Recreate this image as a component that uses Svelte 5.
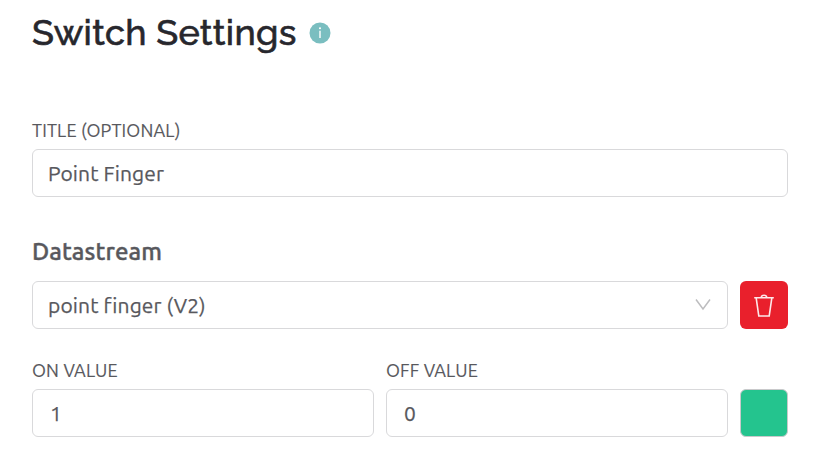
<script>
  let title = $state('Point Finger');
  let onValue = $state('1');
  let offValue = $state('0');
</script>

<main class="settings">
  <header>
    <h1>Switch Settings</h1>
    <svg class="info" width="22" height="22" viewBox="0 0 22 22" aria-label="Information">
      <circle cx="11" cy="11" r="10.5" fill="#7abec0" />
      <circle cx="11" cy="6.2" r="1.05" fill="#fff" />
      <path d="M11 8.7V16" stroke="#fff" stroke-width="1.4" />
    </svg>
  </header>

  <label class="field title-field">
    <span class="caption">TITLE (OPTIONAL)</span>
    <input class="box" bind:value={title} />
  </label>

  <h2>Datastream</h2>
  <div class="row">
    <button class="box select">
      <span>point finger (V2)</span>
      <svg width="18" height="14" viewBox="0 0 18 14" fill="none" stroke="#bdbdbf" stroke-width="1.5">
        <path d="M2 1.5 9 11 16 1.5" />
      </svg>
    </button>
    <button class="square delete" aria-label="Delete">
      <svg width="24" height="26" viewBox="0 0 24 26" fill="none" stroke="#fff" stroke-opacity=".9" stroke-width="1.6">
        <path d="M2.2 5.8H21.8M4.2 6.1 6.8 24H17.2L19.8 6.1M9.3 5.4Q9.5 3.3 12 3.3T14.7 5.4" />
      </svg>
    </button>
  </div>

  <div class="row values">
    <label class="field">
      <span class="caption">ON VALUE</span>
      <input class="box number" bind:value={onValue} />
    </label>
    <label class="field">
      <span class="caption">OFF VALUE</span>
      <input class="box number" bind:value={offValue} />
    </label>
    <button class="square colour" aria-label="Colour"></button>
  </div>
</main>

<style>
  :global(body) { background: #fff; }
  .settings {
    box-sizing: border-box;
    width: 824px;
    height: 469px;
    padding: 8px 36px 0 32px;
    overflow: hidden;
    font-family: Ubuntu, "Noto Sans", sans-serif;
    color: #58585d;
  }
  header { display: flex; align-items: center; height: 50px; }
  h1 {
    margin: 0;
    padding-bottom: 2px;
    width: 276.5px;
    font: 500 36px/48px Raleway, Lato, sans-serif;
    letter-spacing: 0.32px;
    -webkit-text-stroke: 0.6px #27272d;
    color: #27272d;
    white-space: nowrap;
  }
  .info { display: block; flex: none; }
  .field { display: flex; flex-direction: column; flex: 1; min-width: 0; }
  .title-field { margin-top: 61px; }
  .caption { height: 30px; font-size: 18px; letter-spacing: 0.15px; line-height: 22px; white-space: nowrap; align-self: flex-start; -webkit-text-stroke: 0.15px; }
  .box {
    box-sizing: border-box;
    width: 100%;
    height: 48px;
    margin: 0;
    padding: 0 15px;
    border: 1px solid #d9d9db;
    border-radius: 6px;
    outline: 0;
    background: #fff;
    color: inherit;
    font-family: inherit;
    font-size: 21px;
    letter-spacing: 0.12px;
    line-height: 46px;
    -webkit-text-stroke: 0.25px;
  }
  h2 { margin: 39px 0 0; height: 45px; width: max-content; font-size: 24px; line-height: 32px; font-weight: 500; letter-spacing: 0.12px; -webkit-text-stroke: 0.4px; }
  .row { display: flex; gap: 12px; }
  .select { display: flex; flex: 1; align-items: center; justify-content: space-between; text-align: left; }
  .square { box-sizing: border-box; flex: none; width: 48px; height: 48px; padding: 0; border-radius: 6px; }
  .delete { display: grid; place-items: center; border: 0; background: #e9202c; }
  .values { margin-top: 30px; align-items: flex-end; }
  .number { padding-left: 17px; }
  .colour { border: 1px solid #c9c9cb; background: #24c48e; }
</style>
